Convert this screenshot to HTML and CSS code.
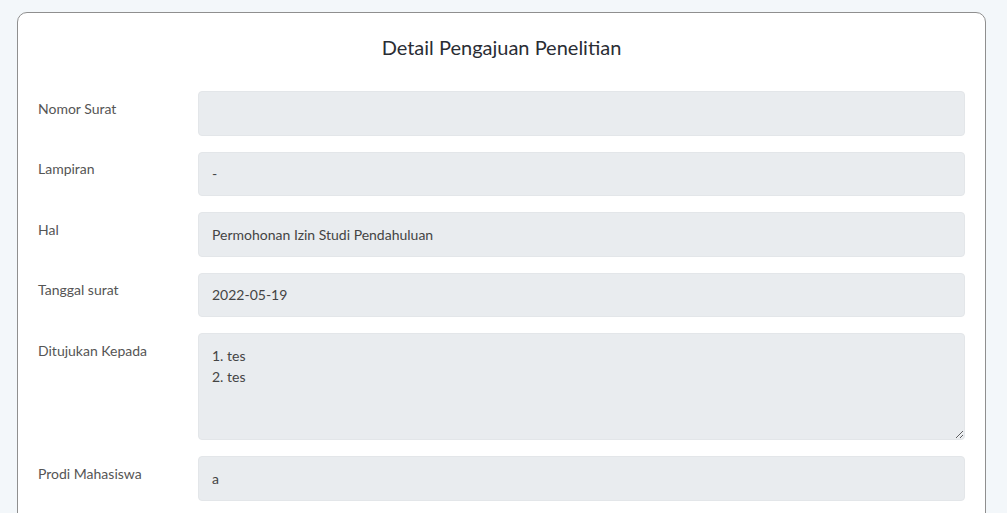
FILE: index.html
```html
<!DOCTYPE html>
<html lang="id">
<head>
<meta charset="utf-8">
<title>Detail Pengajuan Penelitian</title>
<link rel="stylesheet" href="styles.css">
</head>
<body>
<div class="page">
  <div class="card">
    <h2 class="title">Detail Pengajuan Penelitian</h2>
    <div class="form">
      <div class="row">
        <label class="label">Nomor Surat</label>
        <div class="field"></div>
      </div>
      <div class="row">
        <label class="label">Lampiran</label>
        <div class="field">-</div>
      </div>
      <div class="row">
        <label class="label">Hal</label>
        <div class="field">Permohonan Izin Studi Pendahuluan</div>
      </div>
      <div class="row">
        <label class="label">Tanggal surat</label>
        <div class="field">2022-05-19</div>
      </div>
      <div class="row">
        <label class="label">Ditujukan Kepada</label>
        <textarea class="field area" readonly>1. tes
2. tes</textarea>
      </div>
      <div class="row">
        <label class="label">Prodi Mahasiswa</label>
        <div class="field">a</div>
      </div>
    </div>
  </div>
</div>
</body>
</html>
```

FILE: styles.css
```css
html, body {
  margin: 0;
  padding: 0;
  background: #f3f7fa;
  font-family: Lato, "Open Sans", sans-serif;
  color: #444;
}
.page {
  padding: 12px 21px 0 17px;
}
.card {
  background: #fff;
  border: 1px solid #8f8f8f;
  border-radius: 10px;
  padding: 22px 20px 40px 20px;
  min-height: 600px;
}
.title {
  margin: 0;
  text-align: center;
  font-size: 20px;
  font-weight: 400;
  line-height: 24px;
  color: #2a2d34;
}
.form {
  margin-top: 32px;
  display: flex;
  flex-direction: column;
  gap: 16px;
}
.row {
  display: grid;
  grid-template-columns: 160px 1fr;
  align-items: start;
}
.label {
  padding-top: 6.5px;
  font-size: 14px;
  line-height: 21px;
  color: #555;
}
.field {
  box-sizing: border-box;
  height: 44.5px;
  background: #e9ecef;
  border: 1px solid #e3e6e9;
  border-radius: 4px;
  padding: 10.5px 13px;
  font-family: Lato, "Open Sans", sans-serif;
  font-size: 14px;
  line-height: 21px;
  color: #444;
}
.area {
  height: 107px;
  resize: vertical;
  display: block;
  width: 100%;
  margin: 0;
  outline: none;
  overflow: hidden;
}
```
